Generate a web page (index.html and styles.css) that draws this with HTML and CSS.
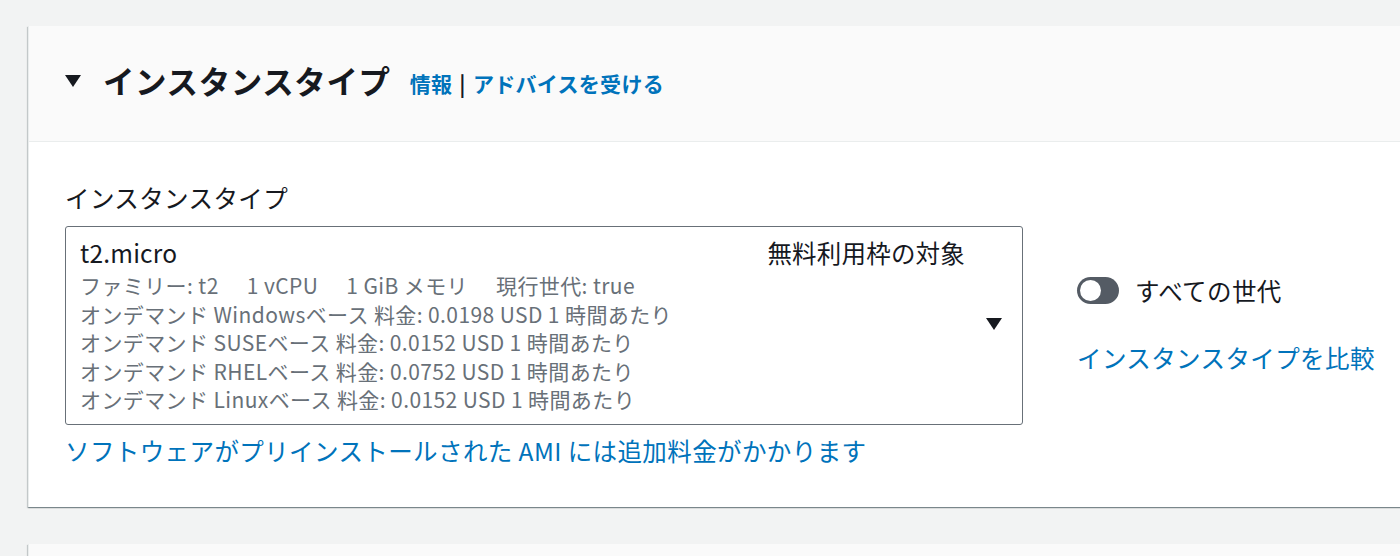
FILE: index.html
```html
<!DOCTYPE html>
<html lang="ja">
  <head>
    <meta charset="UTF-8" />
    <title>インスタンスタイプ</title>
    <link rel="stylesheet" href="styles.css">
  </head>
  <body>
    <div class="page">
      <div class="card">
        <div class="card-header">
          <span class="caret-down"></span>
          <h2 class="title">インスタンスタイプ</h2>
          <span class="header-links">
            <a href="#">情報</a>
            <span class="sep">|</span>
            <a href="#">アドバイスを受ける</a>
          </span>
        </div>
        <div class="card-body">
          <div class="field">
            <div class="label">インスタンスタイプ</div>
            <div class="select">
              <div class="select-content">
                <div class="select-top">
                  <span class="type-name">t2.micro</span>
                  <span class="free-tier">無料利用枠の対象</span>
                </div>
                <div class="desc">
                  <div>ファミリー: t2<span class="gap"></span>1 vCPU<span class="gap"></span>1 GiB メモリ<span class="gap"></span>現行世代: true</div>
                  <div>オンデマンド Windowsベース 料金: 0.0198 USD 1 時間あたり</div>
                  <div>オンデマンド SUSEベース 料金: 0.0152 USD 1 時間あたり</div>
                  <div>オンデマンド RHELベース 料金: 0.0752 USD 1 時間あたり</div>
                  <div>オンデマンド Linuxベース 料金: 0.0152 USD 1 時間あたり</div>
                </div>
              </div>
              <div class="select-arrow"><span class="caret-down"></span></div>
            </div>
            <a class="note" href="#">ソフトウェアがプリインストールされた AMI には追加料金がかかります</a>
          </div>
          <div class="side">
            <div class="toggle-row">
              <span class="toggle"><span class="knob"></span></span>
              <span>すべての世代</span>
            </div>
            <a class="compare" href="#">インスタンスタイプを比較</a>
          </div>
        </div>
      </div>
      <div class="card next">
        <div class="card-header"></div>
      </div>
    </div>
  </body>
</html>
```

FILE: styles.css
```css
html, body {
  margin: 0;
  padding: 0;
  background: #f2f3f3;
  overflow: hidden;
}
body {
  font-family: "Noto Sans CJK JP", "Noto Sans", sans-serif;
  color: #16191f;
  width: 1400px;
  height: 556px;
}
a {
  color: #0073bb;
  text-decoration: none;
}
.page {
  padding: 26px 0 0 28px;
}
.card {
  width: 1420px;
  background: #fff;
  border-left: 1px solid #eaeded;
  box-shadow: 0 1px 1px 0 rgba(0, 28, 36, 0.3), 1px 1px 1px 0 rgba(0, 28, 36, 0.15), -1px 1px 1px 0 rgba(0, 28, 36, 0.15);
}
.card.next {
  margin-top: 37px;
}
.card-header {
  box-sizing: border-box;
  height: 116px;
  background: #fafafa;
  border-bottom: 1px solid #eaeded;
  display: flex;
  align-items: center;
  padding: 0 0 8px 36px;
}
.caret-down {
  width: 0;
  height: 0;
  border-left: 8px solid transparent;
  border-right: 8px solid transparent;
  border-top: 12px solid #16191f;
}
.card-header .caret-down {
  margin-right: 22px;
  margin-top: 2px;
}
.title {
  margin: 0;
  font-size: 31.5px;
  font-weight: 700;
  line-height: 40px;
  letter-spacing: 0.6px;
}
.header-links {
  margin-left: 19px;
  font-size: 21px;
  font-weight: 700;
  margin-top: 6px;
  letter-spacing: 0.3px;
}
.sep {
  color: #16191f;
  margin: 0 2px;
}
.card-body {
  display: flex;
  align-items: flex-start;
  padding: 38px 0 39px 36px;
  letter-spacing: 0.4px;
}
.field {
  width: 958px;
  display: flex;
  flex-direction: column;
  align-items: flex-start;
}
.label {
  font-size: 24.5px;
  line-height: 35px;
  margin-bottom: 11px;
}
.select {
  box-sizing: border-box;
  width: 958px;
  border: 1.5px solid #687078;
  border-radius: 3px;
  display: flex;
  padding: 8px 0 10px 14px;
}
.select-content {
  flex: 1;
}
.select-top {
  display: flex;
  justify-content: space-between;
  align-items: center;
  font-size: 24.5px;
  line-height: 36px;
  letter-spacing: 0.2px;
}
.desc {
  font-size: 21px;
  line-height: 28.6px;
  color: #687078;
}
.gap {
  display: inline-block;
  width: 28px;
}
.select-arrow {
  width: 57px;
  display: flex;
  align-items: center;
  justify-content: center;
}
.note {
  font-size: 24.5px;
  line-height: 35px;
  margin-top: 8px;
}
.side {
  margin-left: 54px;
  padding-top: 93px;
  display: flex;
  flex-direction: column;
  align-items: flex-start;
  font-size: 24.5px;
  line-height: 35px;
}
.toggle-row {
  display: flex;
  align-items: center;
}
.toggle {
  position: relative;
  width: 42px;
  height: 27px;
  border-radius: 14px;
  background: #545b64;
  margin-right: 16px;
}
.knob {
  position: absolute;
  left: 3px;
  top: 3px;
  width: 21px;
  height: 21px;
  border-radius: 50%;
  background: #fff;
}
.compare {
  margin-top: 32px;
}
```
